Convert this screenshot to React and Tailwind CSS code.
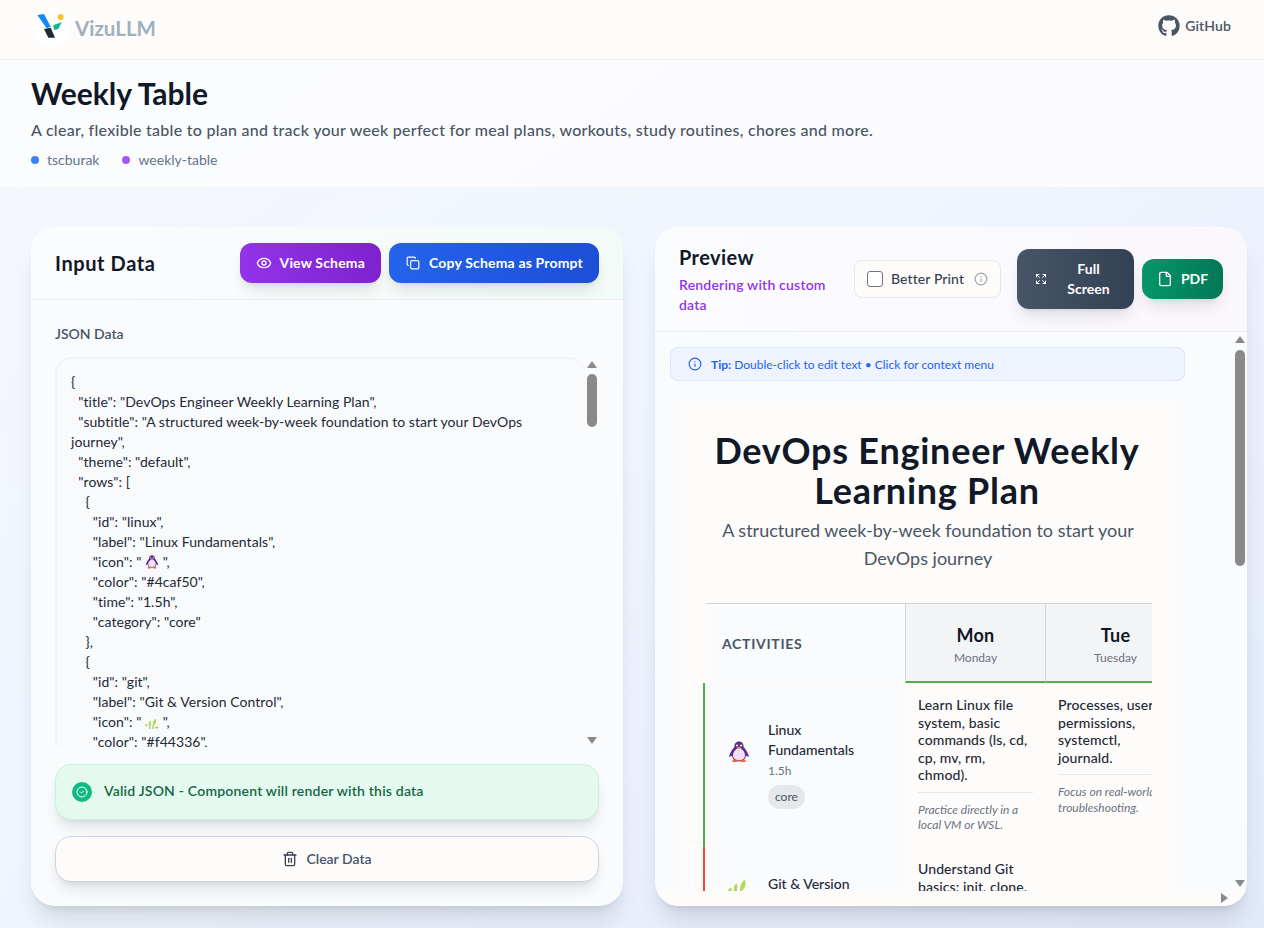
import React from 'react';
import { Eye, Copy, Expand, File, Info, Trash2, CircleCheck } from 'lucide-react';
import { FaGithub } from 'react-icons/fa';

const Penguin = ({ className }) => (
  <svg viewBox="0 0 24 24" className={className}>
    <path d="M12 .500C8.500 .500 7 3 7 6.500 4.500 9 2 13.500 1 17.500l3.500 -1.500C5 19.500 7 22 12 22s7 -2.500 7.500 -6l3.500 1.500C22 13.500 19.500 9 17 6.500 17 3 15.500 .500 12 .500z" fill="#5e2a8c" />
    <path d="M12 7.500c-2 0-3 1-3.500 2-2 1.500-3 3.500-3 6 0 3.500 2.500 5.500 6.500 5.500s6.500 -2 6.500 -5.500c0-2.500 -1 -4.500 -3 -6 -.5 -1 -1.500 -2 -3.500 -2z" fill="#f1def7" />
    <circle cx="9.800" cy="4.800" r="1.100" fill="#fff" />
    <circle cx="14.200" cy="4.800" r="1.100" fill="#fff" />
    <path d="M9.800 6.500h4.400L12 9z" fill="#f59e0b" />
    <path d="M5.500 20.500h5L10 23H4.500zM13.500 20.500h5l1 2.500H14z" fill="#f4661e" />
  </svg>
);

const Herb = ({ className }) => (
  <svg viewBox="0 0 24 24" className={className}>
    <path d="M14 24c-1-4 0-8 3-14M8 24c0-3 0-5 1-8" stroke="#5d8a2f" strokeWidth="1.200" fill="none" />
    <path d="M14 19c-1.500-5 0-10 4.500-13 1.500 5 .5 10-4.500 13zM7 19c-1.500-3-1-6 2-9 2 3 2 6-2 9zM0 19c0-1.500 1-3 3-4 1.500 1 1.500 3 .5 4.500zM16 22c2-2 5-3 8-1-2 2-5 3-8 1z" fill="#aedb55" />
  </svg>
);

const jsonLines = (
  <>
    {`{
  "title": "DevOps Engineer Weekly Learning Plan",
  "subtitle": "A structured week-by-week foundation to start your DevOps journey",
  "theme": "default",
  "rows": [
    {
      "id": "linux",
      "label": "Linux Fundamentals",
      "icon": " `}
    <Penguin className="inline-block w-[14px] h-[14px] align-[-2px]" />
    {` ",
      "color": "#4caf50",
      "time": "1.5h",
      "category": "core"
    },
    {
      "id": "git",
      "label": "Git & Version Control",
      "icon": " `}
    <Herb className="inline-block w-[14px] h-[14px] align-[-2px]" />
    {` ",
      "color": "#f44336",`}
  </>
);

// native-looking scrollbar, the page's own ones don't show in the headless browser
const ScrollArrow = ({ dir, className }) => {
  const shapes = {
    up: 'border-x-[5px] border-b-[7px] border-x-transparent border-b-[#8a8a8a]',
    down: 'border-x-[5px] border-t-[7px] border-x-transparent border-t-[#8a8a8a]',
    right: 'border-y-[5px] border-l-[7px] border-y-transparent border-l-[#8a8a8a]',
  };
  return <div className={`absolute w-0 h-0 ${shapes[dir]} ${className}`} />;
};

const Logo = () => (
  <div className="w-10 h-10 rounded-full bg-white flex items-center justify-center">
    <svg viewBox="0 0 40 40" className="w-10 h-10">
      <path d="M6.300 8L13 7l6.700 12.700-4 1.600z" fill="#0f87f5" />
      <path d="M13 22l6.700-1.300L24 30.700h-6.700z" fill="#1f2933" />
      <path d="M22.300 18l8.400-2.700L27.300 22 23 23z" fill="#14b88a" />
      <circle cx="29.700" cy="10" r="3" fill="#f8c22e" />
    </svg>
  </div>
);

const SchemaButton = ({ icon: Icon, iconClass, children, className }) => (
  <button className={`h-10 px-4 rounded-xl flex items-center gap-2 text-white text-sm font-bold tracking-[0.17px] shadow-lg ${className}`}>
    <Icon className={iconClass} />
    {children}
  </button>
);

const App = () => {
  return (
    <div className="h-[928px] overflow-hidden font-['Lato',sans-serif] bg-gradient-to-br from-[#f6f8fc] via-[#eff5fe] to-[#e2e9fa] text-[#111827]">
      <header className="h-[60px] pl-[31px] pr-[33px] flex items-center justify-between bg-[#fdfcfb] border-b border-[#f0f1f3]">
        <div className="flex items-center gap-1 mt-[-6px]">
          <Logo />
          <span className="text-[20.500px] font-bold text-[#9fb0bd] mt-[3px]">VizuLLM</span>
        </div>
        <a className="flex items-center gap-[5px] mt-[-8px] text-sm font-semibold tracking-[0.1px] text-[#4b5563]">
          <FaGithub className="w-[22px] h-[22px]" />
          GitHub
        </a>
      </header>

      <section className="h-[127px] px-[31px] pt-[15px] bg-[#fcfcfd]/90">
        <h1 className="text-[30px] leading-9 font-bold text-[#111827]">Weekly Table</h1>
        <p className="mt-[7px] text-base leading-6 font-medium tracking-[0.26px] text-[#4b5563]">
          A clear, flexible table to plan and track your week perfect for meal plans, workouts, study routines, chores and more.
        </p>
        <div className="mt-2 flex items-center gap-[23px] text-sm leading-5 text-[#64748b]">
          <span className="flex items-center gap-2">
            <span className="w-2 h-2 rounded-full bg-[#3b82f6]" />
            tscburak
          </span>
          <span className="flex items-center gap-2">
            <span className="w-2 h-2 rounded-full bg-[#a855f7]" />
            weekly-table
          </span>
        </div>
      </section>

      <main className="pl-[31px] pr-[17px] pt-10 grid grid-cols-2 gap-8">
        {/* input panel */}
        <div className="h-[679px] rounded-3xl bg-[#fafbfd] shadow-xl flex flex-col overflow-hidden">
          <div className="h-[73px] shrink-0 px-6 flex items-center justify-between border-b border-[#e9eef3] bg-gradient-to-r from-[#fbfcfe] to-[#f3fbf8]">
            <h2 className="text-xl font-bold tracking-[0.6px]">Input Data</h2>
            <div className="flex gap-2">
              <SchemaButton icon={Eye} iconClass="w-4 h-4" className="bg-gradient-to-r from-[#9333ea] to-[#7e22ce]">View Schema</SchemaButton>
              <SchemaButton icon={Copy} iconClass="w-[14px] h-[14px] mx-[1px]" className="bg-gradient-to-r from-[#2563eb] to-[#1d4ed8]">Copy Schema as Prompt</SchemaButton>
            </div>
          </div>
          <div className="flex-1 px-6 pt-6 flex flex-col">
            <label className="text-sm leading-5 font-semibold text-[#475569]">JSON Data</label>
            <div className="relative mt-[13px] h-[390px]">
              <div className="h-full w-[530px] rounded-t-2xl border-t-2 border-l-2 border-[#f1f3f6] bg-[#f9fafc] pl-[14px] pr-[46px] pt-[13px] overflow-hidden">
                <div className="whitespace-pre-wrap text-sm leading-5 tracking-[0.05px] text-[#1f2937]">{jsonLines}</div>
              </div>
              <ScrollArrow dir="up" className="left-[532px] top-[4px]" />
              <div className="absolute left-[532px] top-[17px] w-[10px] h-[53px] rounded-full bg-[#8a8a8a]" />
              <ScrollArrow dir="down" className="left-[532px] top-[380px]" />
            </div>
            <div className="mt-[17px] h-14 px-4 rounded-2xl flex items-center gap-3 bg-[#e4faef] border border-[#c4f3da] shadow-lg">
              <span className="w-5 h-5 rounded-full bg-[#10b981] flex items-center justify-center">
                <CircleCheck className="w-3 h-3 text-white" />
              </span>
              <span className="text-sm font-semibold tracking-[0.2px] text-[#166544] mt-[-2px]">Valid JSON - Component will render with this data</span>
            </div>
            <button className="mt-4 h-[46px] rounded-2xl flex items-center justify-center gap-2 bg-[#fdfcfb] border border-[#cbd5e1] shadow-lg text-sm font-semibold text-[#475569]">
              <Trash2 className="w-4 h-4 text-[#374151]" />
              Clear Data
            </button>
          </div>
        </div>

        {/* preview panel */}
        <div className="relative h-[679px] rounded-3xl bg-[#fafbfd] shadow-xl flex flex-col overflow-hidden">
          <div className="h-[105px] shrink-0 pl-6 pr-6 flex items-center justify-between border-b border-[#e9eef3] bg-gradient-to-r from-[#fbfcfe] to-[#faf7fd]">
            <div className="w-[160px] mt-[-1px]">
              <h2 className="text-xl leading-7 font-bold tracking-[0.4px]">Preview</h2>
              <p className="mt-1 w-[150px] text-sm leading-5 font-semibold tracking-[0.2px] text-[#9333ea]">Rendering with custom data</p>
            </div>
            <div className="flex items-center gap-2">
              <label className="w-[147px] h-[38px] mr-2 rounded-lg border border-[#e5e7eb] bg-[#fdfcfb] pl-3 flex items-center gap-2 text-sm font-medium tracking-[0.1px] text-[#374151]">
                <span className="w-4 h-4 rounded-[3px] border border-[#767676] bg-white" />
                Better Print
                <Info className="w-[14px] h-[14px] text-[#9ca3af] ml-0.5" />
              </label>
              <button className="w-[117px] h-[60px] rounded-xl pl-4 pr-4 flex items-center gap-3 text-white text-sm font-bold leading-5 bg-gradient-to-r from-[#475569] to-[#334155] shadow-lg">
                <Expand className="w-3 h-3 shrink-0 ml-[2px]" />
                <span className="flex-1 text-center px-2">Full Screen</span>
              </button>
              <button className="w-[81px] h-10 rounded-xl flex items-center justify-center gap-2 text-white text-sm font-bold bg-gradient-to-r from-[#059669] to-[#047857] shadow-lg">
                <File className="w-4 h-4" />
                PDF
              </button>
            </div>
          </div>

          <div className="flex-1 min-h-0 overflow-hidden pl-[15px] pt-[15px]">
            <div className="w-[515px] h-[34px] pl-[17px] pr-4 rounded-lg flex items-center gap-[9px] bg-[#eef3fe] border border-[#dbe7fe] text-xs text-[#2563eb]">
              <Info className="w-[14px] h-[14px]" />
              <span className="mt-[1px]"><b className="font-bold">Tip:</b> Double-click to edit text • Click for context menu</span>
            </div>
            <div className="mt-6 ml-[10px] w-[497px] bg-[#fdfcfb] pt-[25px] pl-[26px] h-[600px]">
              <h1 className="w-[442px] text-center text-4xl leading-10 font-bold tracking-[0.75px] text-[#111827]">DevOps Engineer Weekly Learning Plan</h1>
              <p className="w-[444px] mt-[6px] px-4 text-center text-lg leading-7 text-[#4b5563]">A structured week-by-week foundation to start your DevOps journey</p>
              <div className="relative w-[446px] mt-[31px] overflow-hidden">
                <div className="w-[700px] border-t border-[#d1d5db]">
                  <div className="flex">
                    <div className="w-[199px] h-[78px] pl-4 pt-[30px] bg-[#fafbfd] text-sm leading-5 font-bold tracking-[0.7px] text-[#475569]">ACTIVITIES</div>
                    <div className="w-[140px] h-[79px] border-l border-[#d1d5db] border-b-2 border-b-[#4caf50] bg-[#f3f4f6] text-center pt-[17px]">
                      <div className="text-lg leading-7 font-bold tracking-[0.2px]">Mon</div>
                      <div className="mt-[1px] text-xs leading-4 text-[#6b7280]">Monday</div>
                    </div>
                    <div className="w-[140px] h-[79px] border-l border-[#d1d5db] border-b-2 border-b-[#4caf50] bg-[#f3f4f6] text-center pt-[17px]">
                      <div className="text-lg leading-7 font-bold tracking-[0.2px]">Tue</div>
                      <div className="mt-[1px] text-xs leading-4 text-[#6b7280]">Tuesday</div>
                    </div>
                  </div>
                  <div className="flex h-[165px]">
                    <div className="w-[199px] flex items-center pl-[22px] pb-[2px] bg-[#fafbfd]">
                      <Penguin className="w-[22px] h-[22px] shrink-0 mt-[-25px]" />
                      <div className="ml-[18px] w-[100px]">
                        <div className="text-sm leading-5 font-medium text-[#1f2937]">Linux Fundamentals</div>
                        <div className="mt-[3px] text-xs leading-4 text-[#6b7280]">1.5h</div>
                        <span className="inline-block mt-[6px] px-[7px] py-[3px] rounded-full bg-[#e5e7eb] text-xs leading-[18px] text-[#4b5563]">core</span>
                      </div>
                    </div>
                    <div className="w-[140px] pl-[13px] pr-3 pt-[13px]">
                      <div className="text-sm leading-[17.500px] font-medium tracking-[0.1px] text-[#1f2937]">Learn Linux file system, basic commands (ls, cd, cp, mv, rm, chmod).</div>
                      <div className="mt-2 pt-[9px] border-t border-[#e5e7eb] text-xs leading-[15.500px] italic text-[#6b7280]">Practice directly in a local VM or WSL.</div>
                    </div>
                    <div className="w-[140px] pl-[13px] pr-3 pt-[13px]">
                      <div className="text-sm leading-[17.500px] font-medium tracking-[0.1px] text-[#1f2937]">Processes, users, permissions, systemctl, journald.</div>
                      <div className="mt-2 pt-[9px] border-t border-[#e5e7eb] text-xs leading-[15.500px] italic text-[#6b7280]">Focus on real-world troubleshooting.</div>
                    </div>
                  </div>
                  <div className="flex h-[60px]">
                    <div className="w-[199px] pl-[22px] pt-[26px] flex bg-[#fafbfd]">
                      <Herb className="w-[22px] h-[22px] shrink-0" />
                      <div className="ml-[18px] text-sm leading-5 font-medium text-[#1f2937]">Git & Version</div>
                    </div>
                    <div className="w-[140px] pl-[13px] pr-3 pt-[12px] text-sm leading-[17.500px] font-medium tracking-[0.1px] text-[#1f2937]">Understand Git basics: init, clone.</div>
                  </div>
                </div>
              </div>
            </div>
          </div>
          {/* row colour stripes sit over the table edge */}
          <div className="absolute left-[48px] top-[456px] w-[2px] h-[164px] bg-[#4caf50]" />
          <div className="absolute left-[48px] top-[620px] w-[2px] h-[44px] bg-[#f44336]" />

          <div className="absolute left-0 right-0 bottom-0 h-[15px] bg-[#fdfcfb]" />
          <ScrollArrow dir="up" className="right-[2px] top-[109px]" />
          <div className="absolute right-[2px] top-[123px] w-[10px] h-[216px] rounded-full bg-[#8a8a8a]" />
          <ScrollArrow dir="down" className="right-[2px] top-[653px]" />
          <ScrollArrow dir="right" className="right-[19px] bottom-[3px]" />
        </div>
      </main>
    </div>
  );
};

export default App;
